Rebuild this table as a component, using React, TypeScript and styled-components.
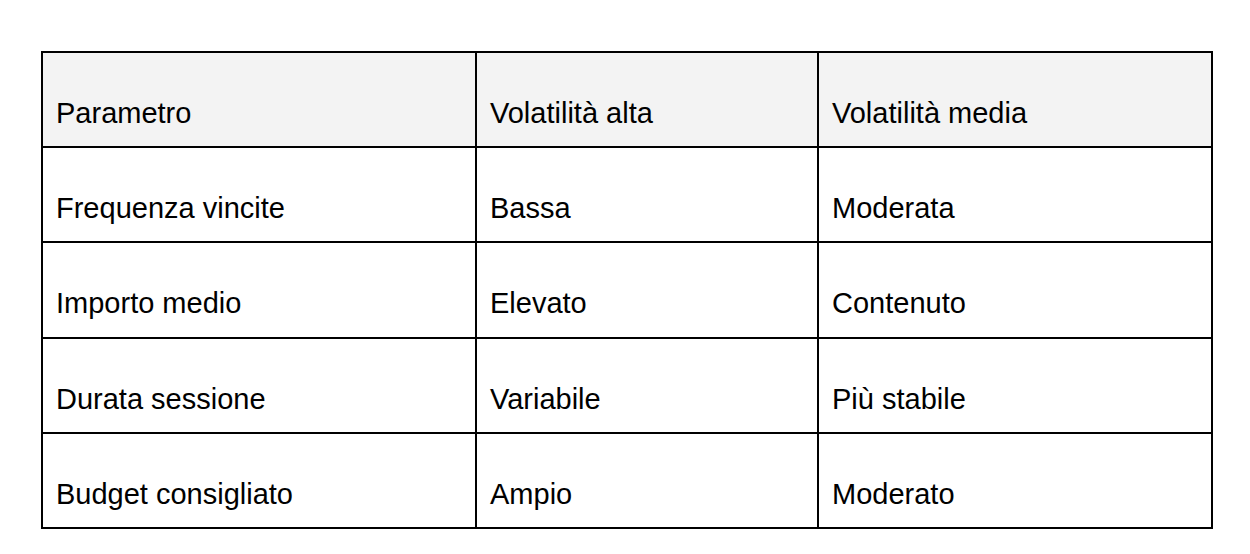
import styled, { createGlobalStyle } from "styled-components";

const GlobalStyle = createGlobalStyle`
  * {
    box-sizing: border-box;
  }
  body {
    margin: 0;
    background: #ffffff;
    font-family: "Liberation Sans", Arial, sans-serif;
  }
`;

const Page = styled.div`
  padding: 51px 0 0 41px;
`;

const Table = styled.table`
  width: 1172px;
  table-layout: fixed;
  border-collapse: separate;
  border-spacing: 0;
  border: 1px solid #000;
`;

const Col = styled.col<{ $w: number }>`
  width: ${(p) => p.$w}px;
`;

const HeadRow = styled.tr`
  background: #f3f3f3;
`;

const Cell = styled.td`
  border: 1px solid #000;
  padding: 44px 13px 17.2px;
  font-size: 29px;
  line-height: 32px;
  color: #000;
  text-align: left;
  font-weight: 400;
  vertical-align: top;
  white-space: nowrap;
`;

const header = ["Parametro", "Volatilità alta", "Volatilità media"];

const rows = [
  ["Frequenza vincite", "Bassa", "Moderata"],
  ["Importo medio", "Elevato", "Contenuto"],
  ["Durata sessione", "Variabile", "Più stabile"],
  ["Budget consigliato", "Ampio", "Moderato"],
];

export default function App() {
  return (
    <Page>
      <GlobalStyle />
      <Table>
        <colgroup>
          <Col $w={434} />
          <Col $w={342} />
          <Col $w={394} />
        </colgroup>
        <thead>
          <HeadRow>
            {header.map((h) => (
              <Cell as="th" key={h}>
                {h}
              </Cell>
            ))}
          </HeadRow>
        </thead>
        <tbody>
          {rows.map((r) => (
            <tr key={r[0]}>
              {r.map((c) => (
                <Cell key={c}>{c}</Cell>
              ))}
            </tr>
          ))}
        </tbody>
      </Table>
    </Page>
  );
}
